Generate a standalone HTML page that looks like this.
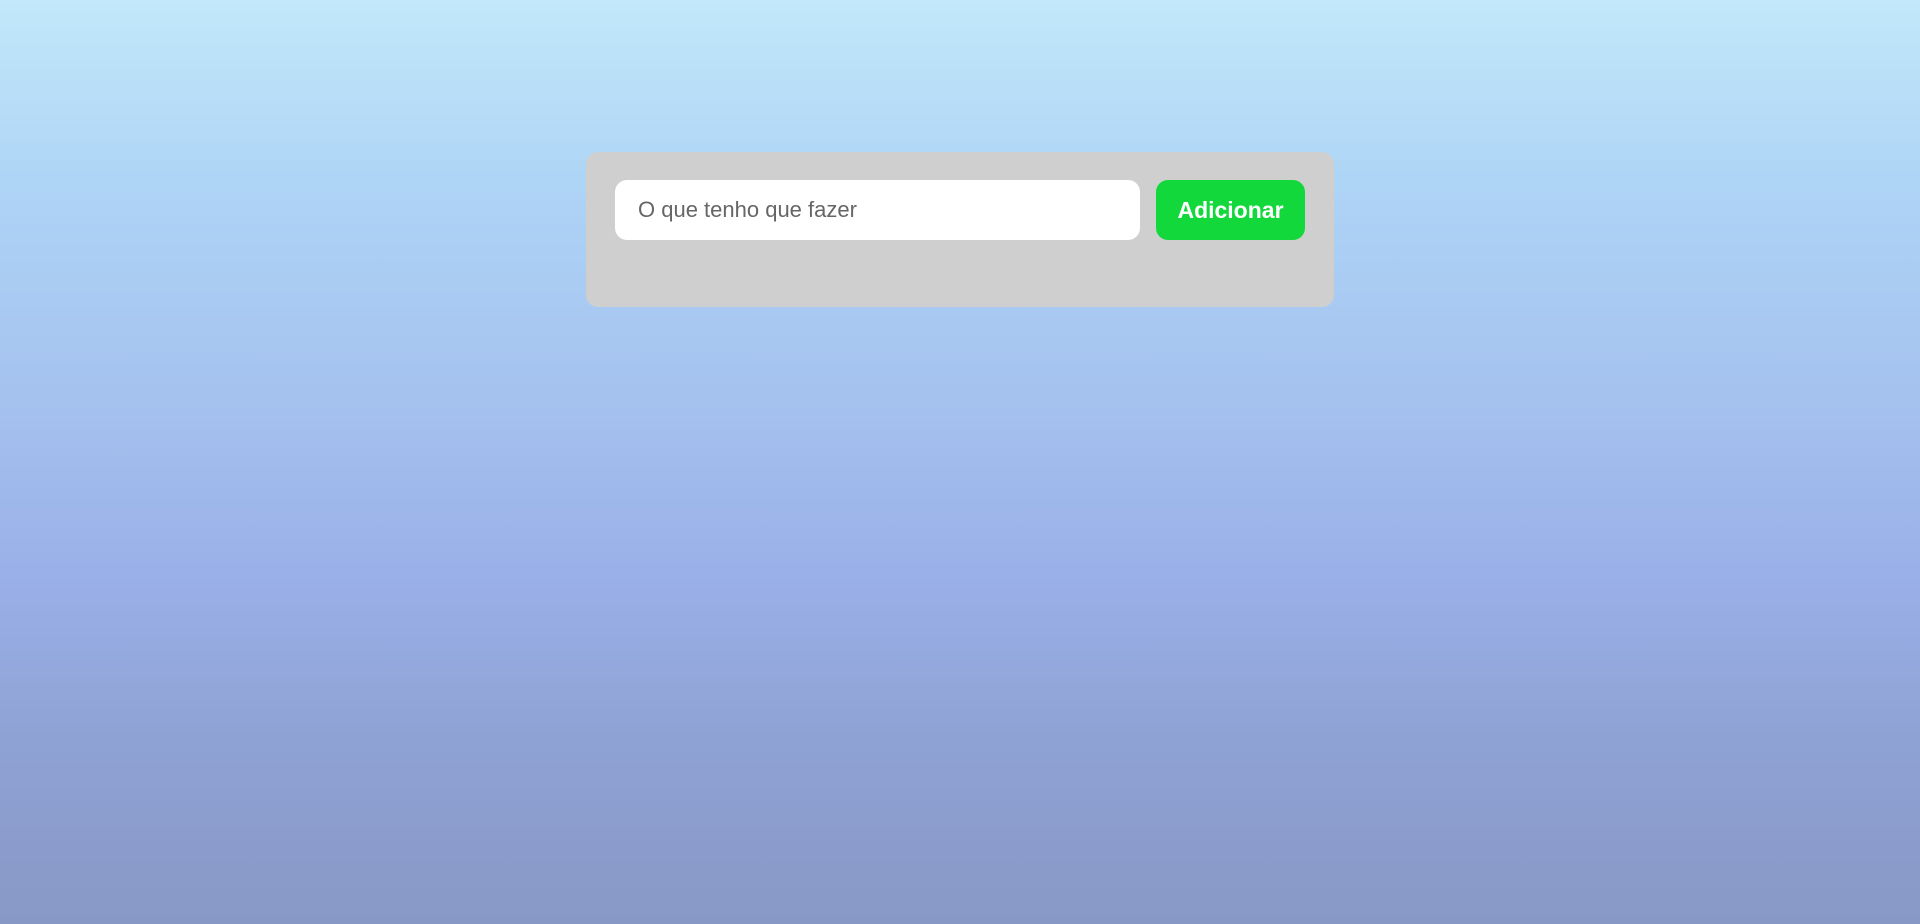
<!DOCTYPE html>
<html><head><meta charset="utf-8"><style>
html,body{margin:0;width:1920px;height:924px;overflow:hidden}
body{background:linear-gradient(#c2e8fa 0%,#aed4f6 20%,#a4c0ee 45%,#9ab0e8 62%,#8fa2d4 80%,#8898c6 100%);font-family:"Liberation Sans",sans-serif;position:relative}
.panel{position:absolute;left:586px;top:152px;width:748px;height:155px;background:#cfcfcf;border-radius:12px}
.inp{position:absolute;left:29px;top:28px;width:525px;height:60px;background:#fff;border-radius:12px;color:#666;font-size:22px;line-height:60px;padding-left:23px;box-sizing:border-box}
.btn{position:absolute;left:570px;top:28px;width:149px;height:60px;background:#12d83c;border-radius:12px;color:#fff;font-weight:bold;font-size:23px;line-height:60px;text-align:center}
</style></head><body>
<div class="panel"><div class="inp">O que tenho que fazer</div><div class="btn">Adicionar</div></div>
</body></html>
